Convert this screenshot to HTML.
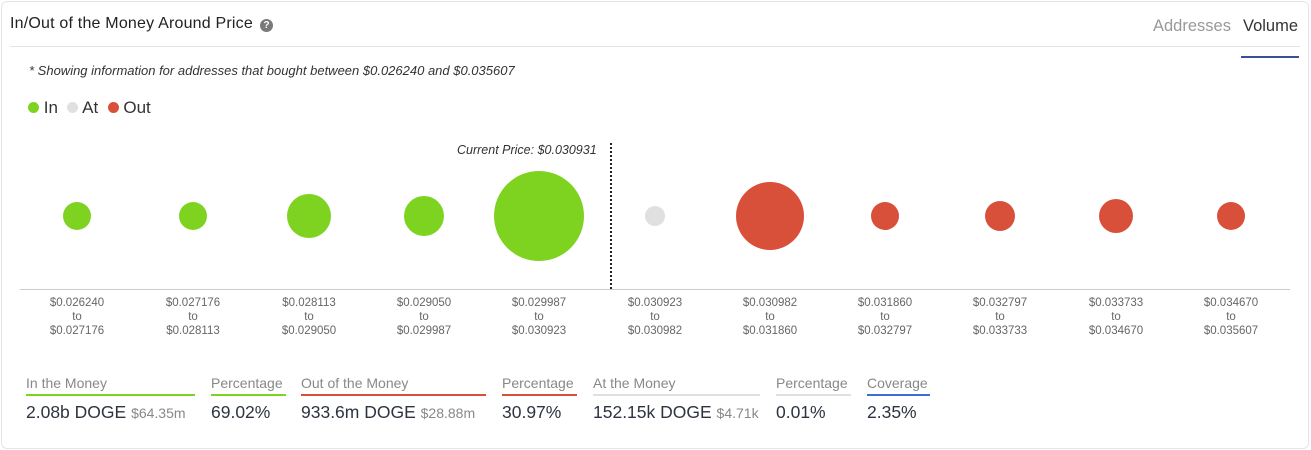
<!DOCTYPE html><html><head><style>
body{margin:0;width:1311px;height:450px;background:#fff;font-family:"Liberation Sans",sans-serif;position:relative;overflow:hidden}
.card{position:absolute;left:1px;top:1px;width:1306px;height:446px;border:1px solid #e3e5ea;border-radius:6px}
.a{position:absolute;white-space:nowrap}
.b{position:absolute;border-radius:50%}
.lbl{position:absolute;width:100px;text-align:center;font-size:11.5px;color:#666;line-height:14px;top:296px}
.st{position:absolute;top:375px;font-size:14px;color:#888}
.st .u{height:2px;margin-top:3px}
.st .v{font-size:17.5px;color:#2c3440;margin-top:6px}
.st .v span{font-size:14px;color:#888}
</style></head><body>
<div class="card"></div>
<div class="a" style="left:10px;top:15px;font-size:16px;color:#222;letter-spacing:0.2px">In/Out of the Money Around Price</div>
<div class="a" style="left:260px;top:19px;width:13px;height:13px;border-radius:50%;background:#7a7a7a;color:#fff;font-size:10px;font-weight:bold;text-align:center;line-height:13px">?</div>
<div class="a" style="left:1153px;top:17px;font-size:16.5px;color:#999">Addresses</div>
<div class="a" style="left:1243px;top:17px;font-size:16.5px;color:#333">Volume</div>
<div class="a" style="left:1241px;top:56px;width:58px;height:2px;background:#3b4e9a"></div>
<div class="a" style="left:10px;top:46px;width:1290px;height:1px;background:#e3e5ea"></div>
<div class="a" style="left:29px;top:63px;font-size:13px;font-style:italic;color:#333">* Showing information for addresses that bought between $0.026240 and $0.035607</div>
<div class="a" style="left:28px;top:98px;font-size:17px;color:#333"><span style="display:inline-block;width:11px;height:11px;border-radius:50%;background:#7ed321"></span> In &nbsp;<span style="display:inline-block;width:11px;height:11px;border-radius:50%;background:#e0e0e0"></span> At &nbsp;<span style="display:inline-block;width:11px;height:11px;border-radius:50%;background:#d9503a"></span> Out</div>
<div class="a" style="left:457px;top:143px;font-size:12.5px;font-style:italic;color:#333">Current Price: $0.030931</div>
<div class="a" style="left:610px;top:143px;height:146px;border-left:2px dotted #222"></div>
<div class="a" style="left:20px;top:289px;width:1270px;height:1px;background:#ccc"></div>
<div class="b" style="left:63px;top:202px;width:28px;height:28px;background:#7ed321"></div>
<div class="b" style="left:179px;top:202px;width:28px;height:28px;background:#7ed321"></div>
<div class="b" style="left:287px;top:194px;width:44px;height:44px;background:#7ed321"></div>
<div class="b" style="left:404px;top:196px;width:40px;height:40px;background:#7ed321"></div>
<div class="b" style="left:494px;top:171px;width:90px;height:90px;background:#7ed321"></div>
<div class="b" style="left:645px;top:206px;width:20px;height:20px;background:#e0e0e0"></div>
<div class="b" style="left:736px;top:182px;width:68px;height:68px;background:#d9503a"></div>
<div class="b" style="left:871px;top:202px;width:28px;height:28px;background:#d9503a"></div>
<div class="b" style="left:985px;top:201px;width:30px;height:30px;background:#d9503a"></div>
<div class="b" style="left:1099px;top:199px;width:34px;height:34px;background:#d9503a"></div>
<div class="b" style="left:1217px;top:202px;width:28px;height:28px;background:#d9503a"></div>
<div class="lbl" style="left:27px">$0.026240<br>to<br>$0.027176</div>
<div class="lbl" style="left:143px">$0.027176<br>to<br>$0.028113</div>
<div class="lbl" style="left:259px">$0.028113<br>to<br>$0.029050</div>
<div class="lbl" style="left:374px">$0.029050<br>to<br>$0.029987</div>
<div class="lbl" style="left:489px">$0.029987<br>to<br>$0.030923</div>
<div class="lbl" style="left:605px">$0.030923<br>to<br>$0.030982</div>
<div class="lbl" style="left:720px">$0.030982<br>to<br>$0.031860</div>
<div class="lbl" style="left:835px">$0.031860<br>to<br>$0.032797</div>
<div class="lbl" style="left:950px">$0.032797<br>to<br>$0.033733</div>
<div class="lbl" style="left:1066px">$0.033733<br>to<br>$0.034670</div>
<div class="lbl" style="left:1181px">$0.034670<br>to<br>$0.035607</div>
<div class="st" style="left:26px;width:169px">In the Money<div class="u" style="background:#7ed321"></div><div class="v">2.08b DOGE <span>$64.35m</span></div></div>
<div class="st" style="left:211px;width:75px">Percentage<div class="u" style="background:#7ed321"></div><div class="v">69.02%</div></div>
<div class="st" style="left:301px;width:185px">Out of the Money<div class="u" style="background:#d9503a"></div><div class="v">933.6m DOGE <span>$28.88m</span></div></div>
<div class="st" style="left:502px;width:75px">Percentage<div class="u" style="background:#d9503a"></div><div class="v">30.97%</div></div>
<div class="st" style="left:593px;width:167px">At the Money<div class="u" style="background:#e0e0e0"></div><div class="v">152.15k DOGE <span>$4.71k</span></div></div>
<div class="st" style="left:776px;width:75px">Percentage<div class="u" style="background:#e0e0e0"></div><div class="v">0.01%</div></div>
<div class="st" style="left:867px;width:63px">Coverage<div class="u" style="background:#3b6fd8"></div><div class="v">2.35%</div></div>
</body></html>
